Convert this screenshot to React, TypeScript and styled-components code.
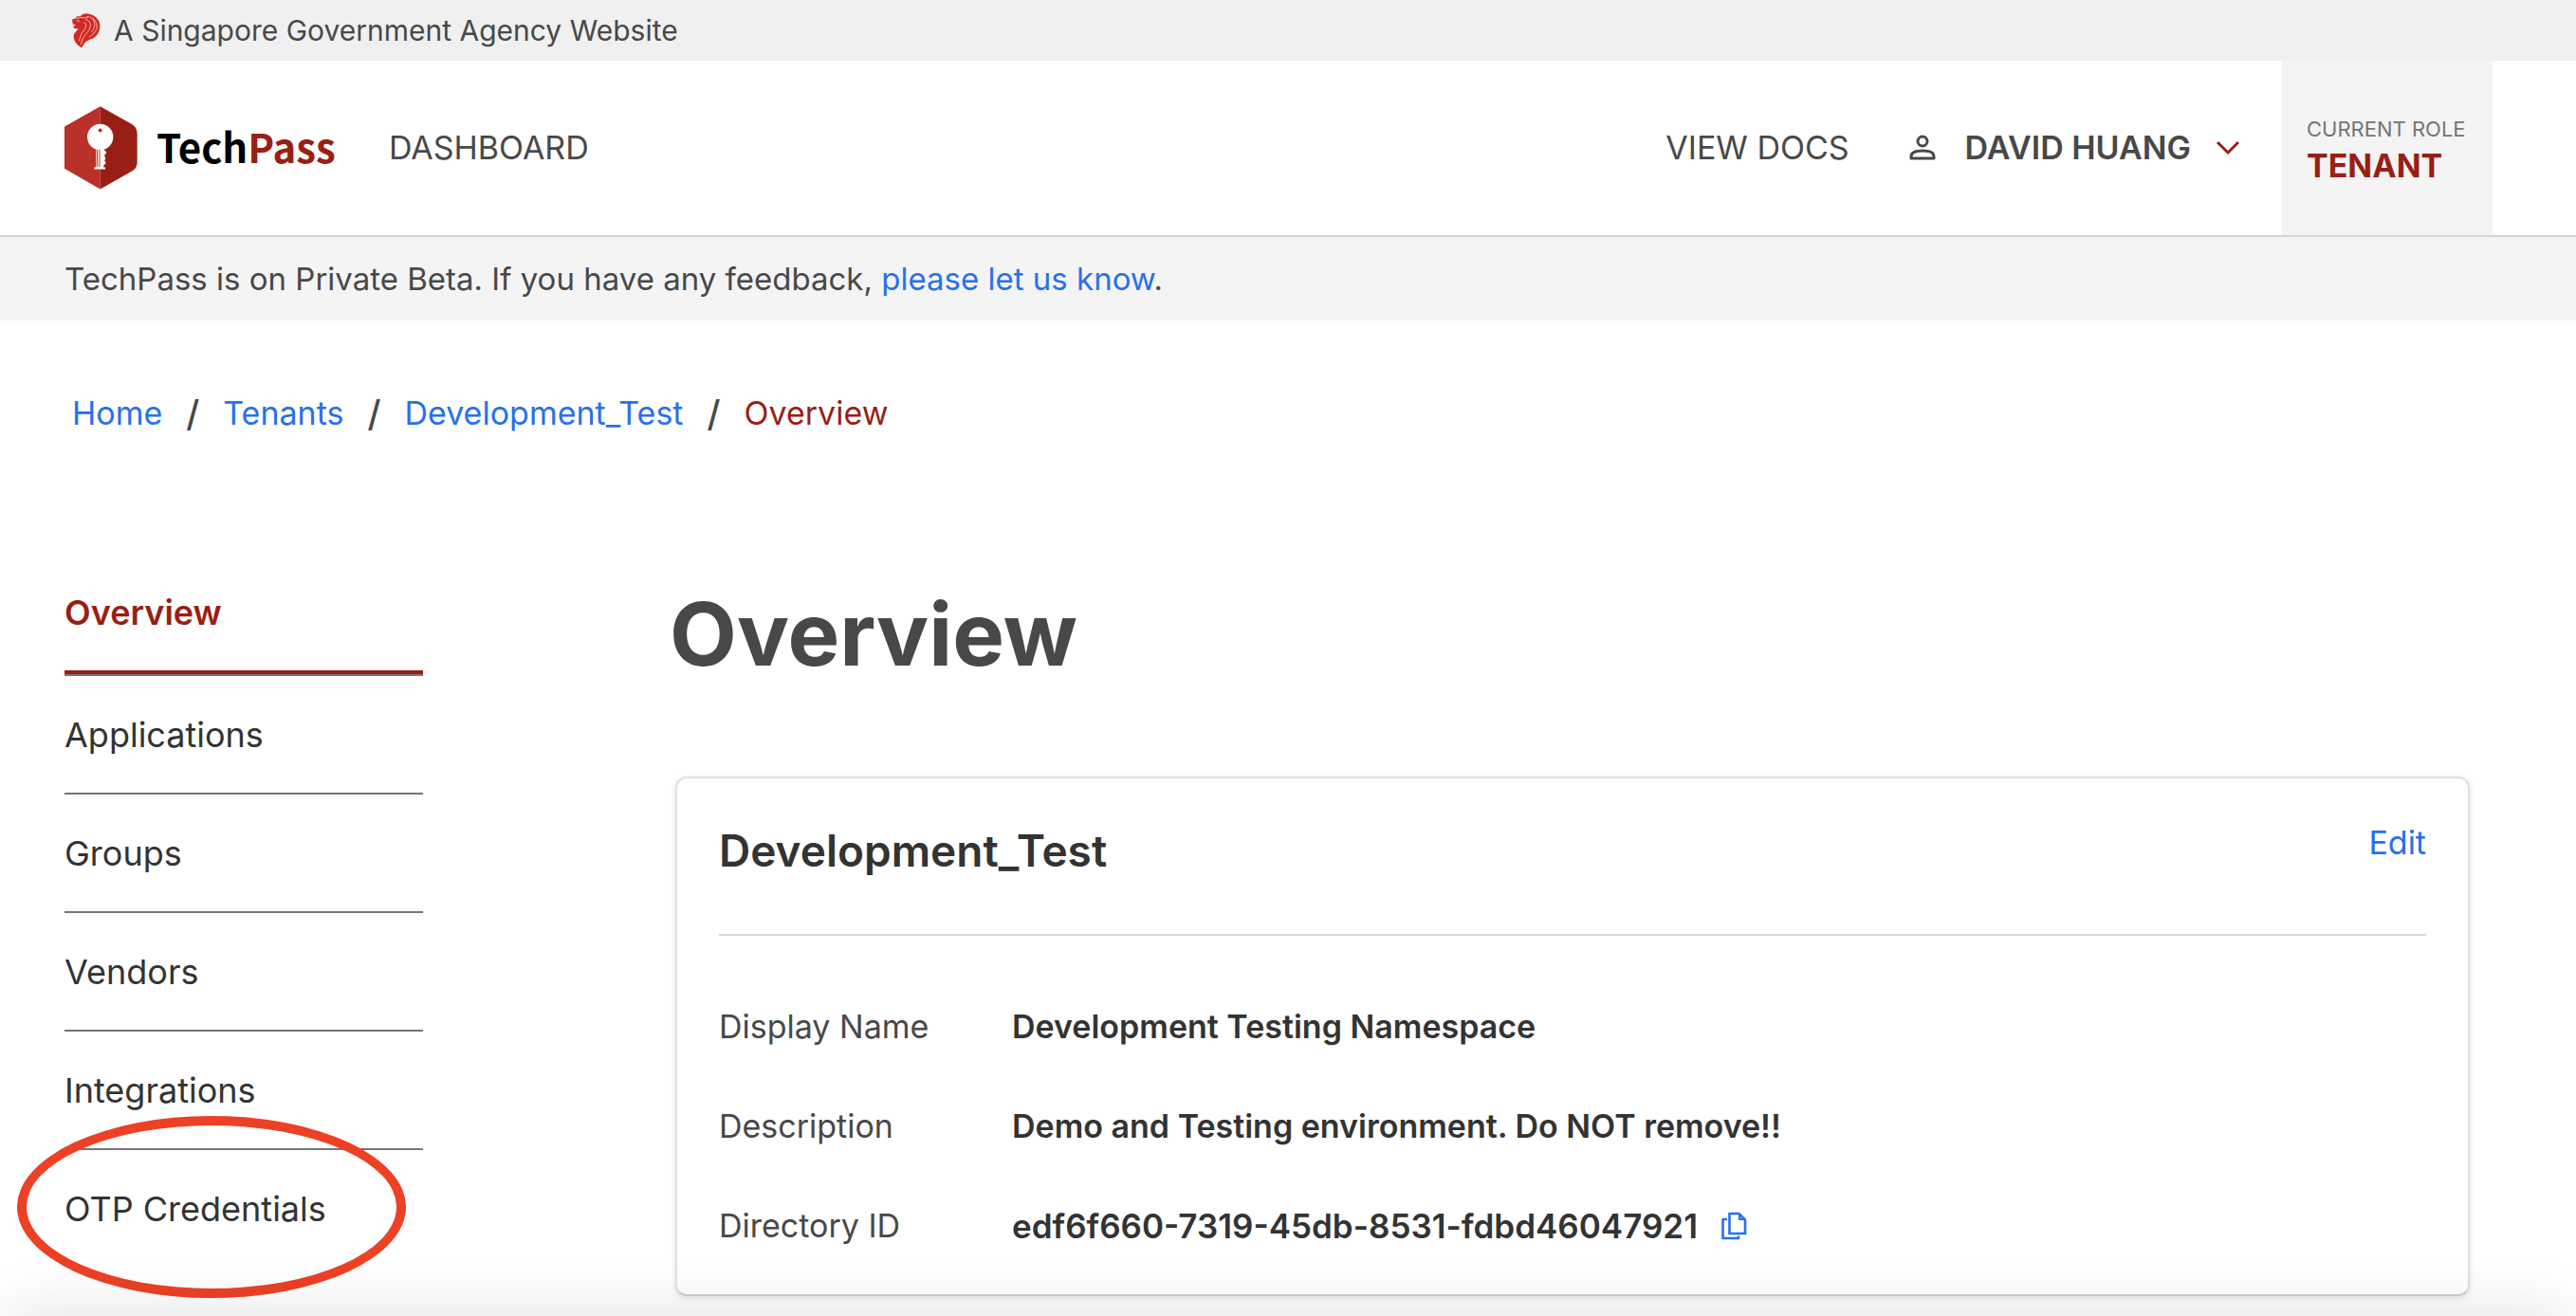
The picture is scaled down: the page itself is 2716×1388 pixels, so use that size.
import React from "react";
import styled, { createGlobalStyle } from "styled-components";

const GlobalStyle = createGlobalStyle`
  *, *::before, *::after { box-sizing: border-box; }
  body {
    margin: 0;
    background: #fff;
    color: #484848;
    font-family: Inter, "Liberation Sans", sans-serif;
    font-size: 34px;
    line-height: 48px;
  }
  h1, h2, p, ul, ol, dl, dd { margin: 0; padding: 0; }
  ul, ol { list-style: none; }
  a { color: #2970ea; text-decoration: none; }
`;

const Page = styled.div`
  position: relative;
  min-height: 100vh;
  overflow: hidden;
`;

const Masthead = styled.div`
  display: flex;
  align-items: center;
  gap: 14px;
  height: 64px;
  padding: 0 76px;
  background: #f0f0f0;
  font-size: 30px;
`;

const Header = styled.header`
  display: flex;
  align-items: center;
  height: 186px;
  padding: 0 88px 0 68px;
  border-bottom: 2px solid #d6d6d6;
`;

const Brand = styled.a`
  display: flex;
  align-items: center;
  gap: 20px;
  color: #000;
`;

const Wordmark = styled.span`
  padding-bottom: 4px;
  font-family: "Noto Sans CJK SC", "Noto Sans", sans-serif;
  font-size: 42px;
  font-weight: 700;
`;

const BrandAccent = styled.span`
  color: #991f14;
`;

const NavLink = styled.a`
  color: #484848;
`;

const MainNav = styled.nav`
  flex: 1;
  margin-left: 56px;
`;

const UserButton = styled.button`
  display: flex;
  align-items: center;
  margin: 0 44px 0 62px;
  padding: 0;
  border: 0;
  background: none;
  color: #484848;
  font: inherit;
  font-weight: 600;
`;

const UserName = styled.span`
  margin: 0 26px 0 30px;
`;

const Role = styled.div`
  display: flex;
  flex-direction: column;
  justify-content: center;
  align-self: stretch;
  min-width: 222px;
  padding: 4px 26px 0;
  background: #f4f4f4;
`;

const RoleLabel = styled.span`
  font-size: 22px;
  line-height: 34px;
  color: #757575;
`;

const RoleName = styled.strong`
  font-weight: 700;
  line-height: 44px;
  color: #991f14;
`;

const Banner = styled.p`
  padding: 20px 68px;
  background: #f4f4f4;
  font-size: 33px;
`;

const Breadcrumbs = styled.ol`
  display: flex;
  gap: 25px;
  padding: 74px 76px 0;
`;

const Crumb = styled.li`
  display: flex;
  gap: 25px;
  color: #991f14;
`;

const Slash = styled.span`
  font-size: 38px;
  font-weight: 500;
  color: #484848;
`;

const Content = styled.main`
  display: grid;
  grid-template-columns: 378px minmax(0, 1fr);
  column-gap: 260px;
  padding: 124px 112px 0 68px;
`;

const SideItem = styled.li`
  position: relative;
  border-bottom: 2px solid #757575;
  &:last-child { border-bottom: 0; }
`;

const SideLink = styled.a<{ $active?: boolean }>`
  display: block;
  padding: 38px 0 37px;
  font-size: 36px;
  color: ${(p) => (p.$active ? "#991f14" : "#333")};
  ${(p) => p.$active && "font-weight: 600; border-bottom: 4px solid #991f14;"}
`;

const Ring = styled.span`
  position: absolute;
  left: -50px;
  top: -36px;
  width: 410px;
  height: 192px;
  border: 10px solid #ec4125;
  border-radius: 50%;
  pointer-events: none;
`;

const Title = styled.h1`
  margin: 25px 0 90px;
  font-size: 92px;
  line-height: 120px;
  font-weight: 700;
`;

const Card = styled.section`
  margin-left: 6px;
  padding: 44px 44px 48px;
  border: 2px solid #e0e0e0;
  border-bottom-color: #cfcfcf;
  border-radius: 12px;
  box-shadow: 0 2px 6px rgba(0, 0, 0, 0.12);
  color: #333;
`;

const CardHeader = styled.div`
  display: flex;
  justify-content: space-between;
  align-items: flex-start;
  padding-bottom: 56px;
  border-bottom: 2px solid #d6d6d6;
`;

const CardTitle = styled.h2`
  font-size: 46px;
  line-height: 64px;
  font-weight: 600;
`;

const Details = styled.dl`
  display: grid;
  grid-template-columns: 309px 1fr;
  row-gap: 57px;
  padding-top: 72px;
`;

const Term = styled.dt`
  color: #484848;
`;

const Value = styled.dd`
  display: flex;
  align-items: center;
  gap: 24px;
  font-weight: 600;
`;

const Identifier = styled.span`
  font-size: 35px;
`;

const CopyButton = styled.button`
  display: flex;
  padding: 0;
  border: 0;
  background: none;
  color: #2970ea;
`;

const Fade = styled.div`
  position: absolute;
  inset: auto 10px -40px;
  height: 40px;
  box-shadow: 0 0 64px rgba(0, 0, 0, 0.15);
  pointer-events: none;
`;

const Lion = () => (
  <svg width="30" height="37" viewBox="34 13 90 110" aria-hidden="true">
    <path
      fill="#d22a22"
      d="M44 29 L50 22 L60 22 Q66 13 80 13 L94 16 Q112 22 120 40 Q126 58 116 76 Q108 90 90 96 Q72 103 65 122 Q40 108 39 88 Q38 78 48 68 L54 62 L40 60 L38 54 L46 50 L36 46 L34 32 Z"
    />
    <g fill="none" stroke="#f0f0f0" strokeWidth="2">
      <path d="M46 30 L60 26 L84 27" />
      <path d="M80 23 Q98 22 104 40 Q109 58 94 72" />
      <path d="M76 32 Q94 36 92 54 Q89 68 76 80 Q64 94 62 112" />
      <path d="M72 40 Q82 48 76 60 Q60 76 56 100" />
      <path d="M98 26 Q116 42 112 62 Q106 78 88 88" />
      <path d="M48 36 L58 37" />
    </g>
  </svg>
);

const KeyLogo = () => (
  <svg width="77" height="88" viewBox="54 37 231 263" aria-hidden="true">
    <path d="M167 37 V299 L54 234 V101 Z" fill="#b93128" />
    <path d="M167 37 L266 93 Q284 104 284 124 V214 Q284 233 266 243 L167 299 Z" fill="#991f14" />
    <circle cx="167" cy="134" r="41" fill="#fff" />
    <circle cx="167" cy="113" r="6" fill="#b93128" />
    <path
      d="M154 170 H180 V176 L187 181 L184 188 L180 192 L184 202 L180 208 L184 212 V220 L178 222 V230 H183 V236 H148 V230 H154 Z"
      fill="#fff"
    />
    <path d="M158 174 V229 M165 174 V229" stroke="#b93128" strokeWidth="3" />
  </svg>
);

const UserIcon = () => (
  <svg width="30" height="30" viewBox="0 0 30 30" fill="none" stroke="currentColor" strokeWidth="3" aria-hidden="true">
    <circle cx="15" cy="8" r="5" />
    <path d="M3 26 V24 Q3 18 15 18 Q27 18 27 24 V26 Z" strokeLinejoin="round" />
  </svg>
);

const ChevronIcon = () => (
  <svg width="26" height="16" viewBox="0 0 26 16" fill="none" stroke="#991f14" strokeWidth="3" aria-hidden="true">
    <path d="M2 2 L13 13 L24 2" />
  </svg>
);

const CopyIcon = () => (
  <svg width="28" height="32" viewBox="0 0 28 32" fill="none" stroke="currentColor" strokeWidth="2.6" aria-hidden="true">
    <path d="M9.5 3 H19.5 L26 9.5 V24 H9.5 Z" />
    <path d="M20 3 V9 H26" strokeWidth="2" />
    <path d="M7 9 H2.5 V29 H19 V26.5" strokeLinejoin="round" />
  </svg>
);

const sideItems = ["Overview", "Applications", "Groups", "Vendors", "Integrations", "OTP Credentials"];
const crumbs = ["Home", "Tenants", "Development_Test"];

export default function App() {
  return (
    <Page>
      <GlobalStyle />
      <Masthead>
        <Lion />
        A Singapore Government Agency Website
      </Masthead>
      <Header>
        <Brand href="#">
          <KeyLogo />
          <Wordmark>Tech<BrandAccent>Pass</BrandAccent></Wordmark>
        </Brand>
        <MainNav>
          <NavLink href="#">DASHBOARD</NavLink>
        </MainNav>
        <NavLink href="#">VIEW DOCS</NavLink>
        <UserButton type="button">
          <UserIcon />
          <UserName>DAVID HUANG</UserName>
          <ChevronIcon />
        </UserButton>
        <Role>
          <RoleLabel>CURRENT ROLE</RoleLabel>
          <RoleName>TENANT</RoleName>
        </Role>
      </Header>
      <Banner>
        TechPass is on Private Beta. If you have any feedback, <a href="#">please let us know</a>.
      </Banner>
      <nav aria-label="Breadcrumb">
        <Breadcrumbs>
          {crumbs.map((name) => (
            <Crumb key={name}>
              <a href="#">{name}</a>
              <Slash>/</Slash>
            </Crumb>
          ))}
          <Crumb aria-current="page">Overview</Crumb>
        </Breadcrumbs>
      </nav>
      <Content>
        <nav aria-label="Tenant">
          <ul>
            {sideItems.map((name) => (
              <SideItem key={name}>
                <SideLink href="#" $active={name === "Overview"}>{name}</SideLink>
                {name === "OTP Credentials" && <Ring />}
              </SideItem>
            ))}
          </ul>
        </nav>
        <div>
          <Title>Overview</Title>
          <Card>
            <CardHeader>
              <CardTitle>Development_Test</CardTitle>
              <a href="#">Edit</a>
            </CardHeader>
            <Details>
              <Term>Display Name</Term>
              <Value>Development Testing Namespace</Value>
              <Term>Description</Term>
              <Value>Demo and Testing environment. Do NOT remove!!</Value>
              <Term>Directory ID</Term>
              <Value>
                <Identifier>edf6f660-7319-45db-8531-fdbd46047921</Identifier>
                <CopyButton type="button" aria-label="Copy directory ID">
                  <CopyIcon />
                </CopyButton>
              </Value>
            </Details>
          </Card>
        </div>
      </Content>
      <Fade />
    </Page>
  );
}
